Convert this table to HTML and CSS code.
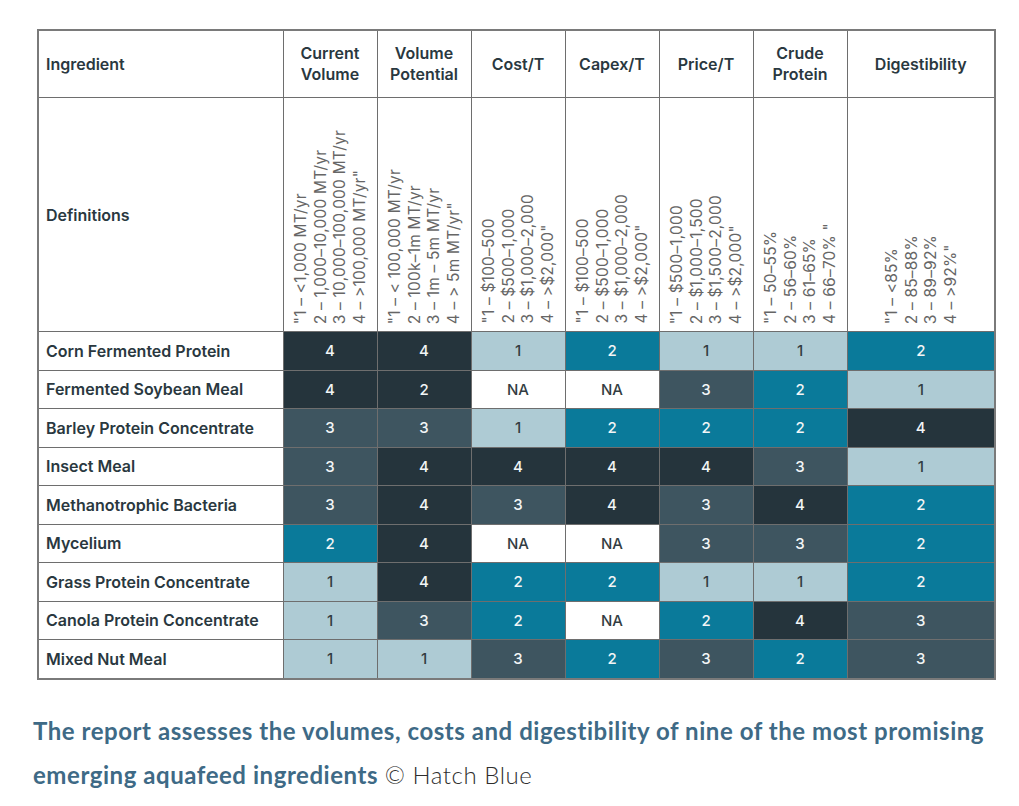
FILE: index.html
```html
<!DOCTYPE html>
<html lang="en">
<head>
<meta charset="utf-8">
<title>Aquafeed ingredients</title>
<link rel="stylesheet" href="styles.css">
</head>
<body>
<div class="page">
<table class="grid">
<colgroup>
<col class="c-name"><col class="c-num"><col class="c-num"><col class="c-num"><col class="c-num"><col class="c-num"><col class="c-num"><col class="c-dig">
</colgroup>
<thead>
<tr class="head">
<th class="name">Ingredient</th>
<th>Current<br>Volume</th>
<th>Volume<br>Potential</th>
<th>Cost/T</th>
<th>Capex/T</th>
<th>Price/T</th>
<th>Crude<br>Protein</th>
<th>Digestibility</th>
</tr>
<tr class="defs">
<th class="name">Definitions</th>
<td><div class="rot">"1 – &lt;1,000 MT/yr<br>2 – 1,000–10,000 MT/yr<br>3 – 10,000–100,000 MT/yr<br>4 – &gt;100,000 MT/yr"</div></td>
<td><div class="rot">"1 – &lt; 100,000 MT/yr<br>2 – 100k–1m MT/yr<br>3 – 1m – 5m MT/yr<br>4 – &gt; 5m MT/yr"</div></td>
<td><div class="rot">"1 – $100–500<br>2 – $500–1,000<br>3 – $1,000–2,000<br>4 – &gt;$2,000"</div></td>
<td><div class="rot">"1 – $100–500<br>2 – $500–1,000<br>3 – $1,000–2,000<br>4 – &gt;$2,000"</div></td>
<td><div class="rot">"1 – $500–1,000<br>2 – $1,000–1,500<br>3 – $1,500–2,000<br>4 – &gt;$2,000"</div></td>
<td><div class="rot">"1 – 50–55%<br>2 – 56–60%<br>3 – 61–65%<br>4 – 66–70% "</div></td>
<td><div class="rot">"1 – &lt;85%<br>2 – 85–88%<br>3 – 89–92%<br>4 – &gt;92%"</div></td>
</tr>
</thead>
<tbody>
<tr><th class="name">Corn Fermented Protein</th><td class="v4">4</td><td class="v4">4</td><td class="v1">1</td><td class="v2">2</td><td class="v1">1</td><td class="v1">1</td><td class="v2">2</td></tr>
<tr><th class="name">Fermented Soybean Meal</th><td class="v4">4</td><td class="v4">2</td><td class="na">NA</td><td class="na">NA</td><td class="v3">3</td><td class="v2">2</td><td class="v1">1</td></tr>
<tr><th class="name">Barley Protein Concentrate</th><td class="v3">3</td><td class="v3">3</td><td class="v1">1</td><td class="v2">2</td><td class="v2">2</td><td class="v2">2</td><td class="v4">4</td></tr>
<tr><th class="name">Insect Meal</th><td class="v3">3</td><td class="v4">4</td><td class="v4">4</td><td class="v4">4</td><td class="v4">4</td><td class="v3">3</td><td class="v1">1</td></tr>
<tr><th class="name">Methanotrophic Bacteria</th><td class="v3">3</td><td class="v4">4</td><td class="v3">3</td><td class="v4">4</td><td class="v3">3</td><td class="v4">4</td><td class="v2">2</td></tr>
<tr><th class="name">Mycelium</th><td class="v2">2</td><td class="v4">4</td><td class="na">NA</td><td class="na">NA</td><td class="v3">3</td><td class="v3">3</td><td class="v2">2</td></tr>
<tr><th class="name">Grass Protein Concentrate</th><td class="v1">1</td><td class="v4">4</td><td class="v2">2</td><td class="v2">2</td><td class="v1">1</td><td class="v1">1</td><td class="v2">2</td></tr>
<tr><th class="name">Canola Protein Concentrate</th><td class="v1">1</td><td class="v3">3</td><td class="v2">2</td><td class="na">NA</td><td class="v2">2</td><td class="v4">4</td><td class="v3">3</td></tr>
<tr><th class="name">Mixed Nut Meal</th><td class="v1">1</td><td class="v1">1</td><td class="v3">3</td><td class="v2">2</td><td class="v3">3</td><td class="v2">2</td><td class="v3">3</td></tr>
</tbody>
</table>
<p class="caption"><strong>The report assesses the volumes, costs and digestibility of nine of the most promising emerging aquafeed ingredients</strong> <span class="credit">© Hatch Blue</span></p>
</div>
</body>
</html>
```

FILE: styles.css
```css
html, body {
  margin: 0;
  padding: 0;
  background: #ffffff;
}

.page {
  padding: 29px 0 0 33px;
  width: 962px;
}

.grid {
  margin-left: 4px;
  width: 957px;
  table-layout: fixed;
  border-collapse: collapse;
  border: 2px solid #7a7a7a;
  font-family: Inter, Roboto, "Liberation Sans", Arial, sans-serif;
  color: #2a3840;
}

.c-name { width: 245px; }
.c-num { width: 94px; }
.c-dig { width: 148px; }

.grid th,
.grid td {
  border: 1px solid #6e6e6e;
  padding: 0;
  text-align: center;
}

.head th {
  height: 66px;
  font-size: 16px;
  font-weight: 600;
  line-height: 21px;
  color: #2a3840;
}

.grid th.name {
  text-align: left;
  padding-left: 7px;
  font-size: 16px;
  font-weight: 600;
  color: #2a3840;
}

.defs td,
.defs th {
  height: 226px;
}

.defs td {
  vertical-align: bottom;
  padding-bottom: 7px;
  line-height: 0;
}

.rot {
  display: inline-block;
  vertical-align: top;
  writing-mode: vertical-rl;
  transform: rotate(180deg);
  text-align: left;
  font-size: 15.5px;
  line-height: 19.5px;
  letter-spacing: 0.2px;
  font-weight: 400;
  color: #666666;
  white-space: nowrap;
}

tbody th,
tbody td {
  height: 37.5px;
}

tbody td {
  font-size: 15px;
  font-weight: 500;
}

.v4 { background: #25343c; color: #f2f5f6; border-color: #1d2a30; }
.v3 { background: #3e5560; color: #f2f5f6; border-color: #1d2a30; }
.v2 { background: #0a7a9a; color: #f2f5f6; border-color: #1d2a30; }
.v1 { background: #aecbd4; color: #333d42; border-color: #1d2a30; }
.na { background: #ffffff; color: #333d42; }

.caption {
  margin: 29px 0 0 0;
  font-family: Lato, "Open Sans", sans-serif;
  font-size: 24px;
  line-height: 44px;
  letter-spacing: 0.55px;
  color: #333333;
}

.caption strong {
  font-weight: 700;
  color: #3e6a86;
}

.caption .credit {
  font-weight: 300;
  color: #2e2e2e;
}
```
